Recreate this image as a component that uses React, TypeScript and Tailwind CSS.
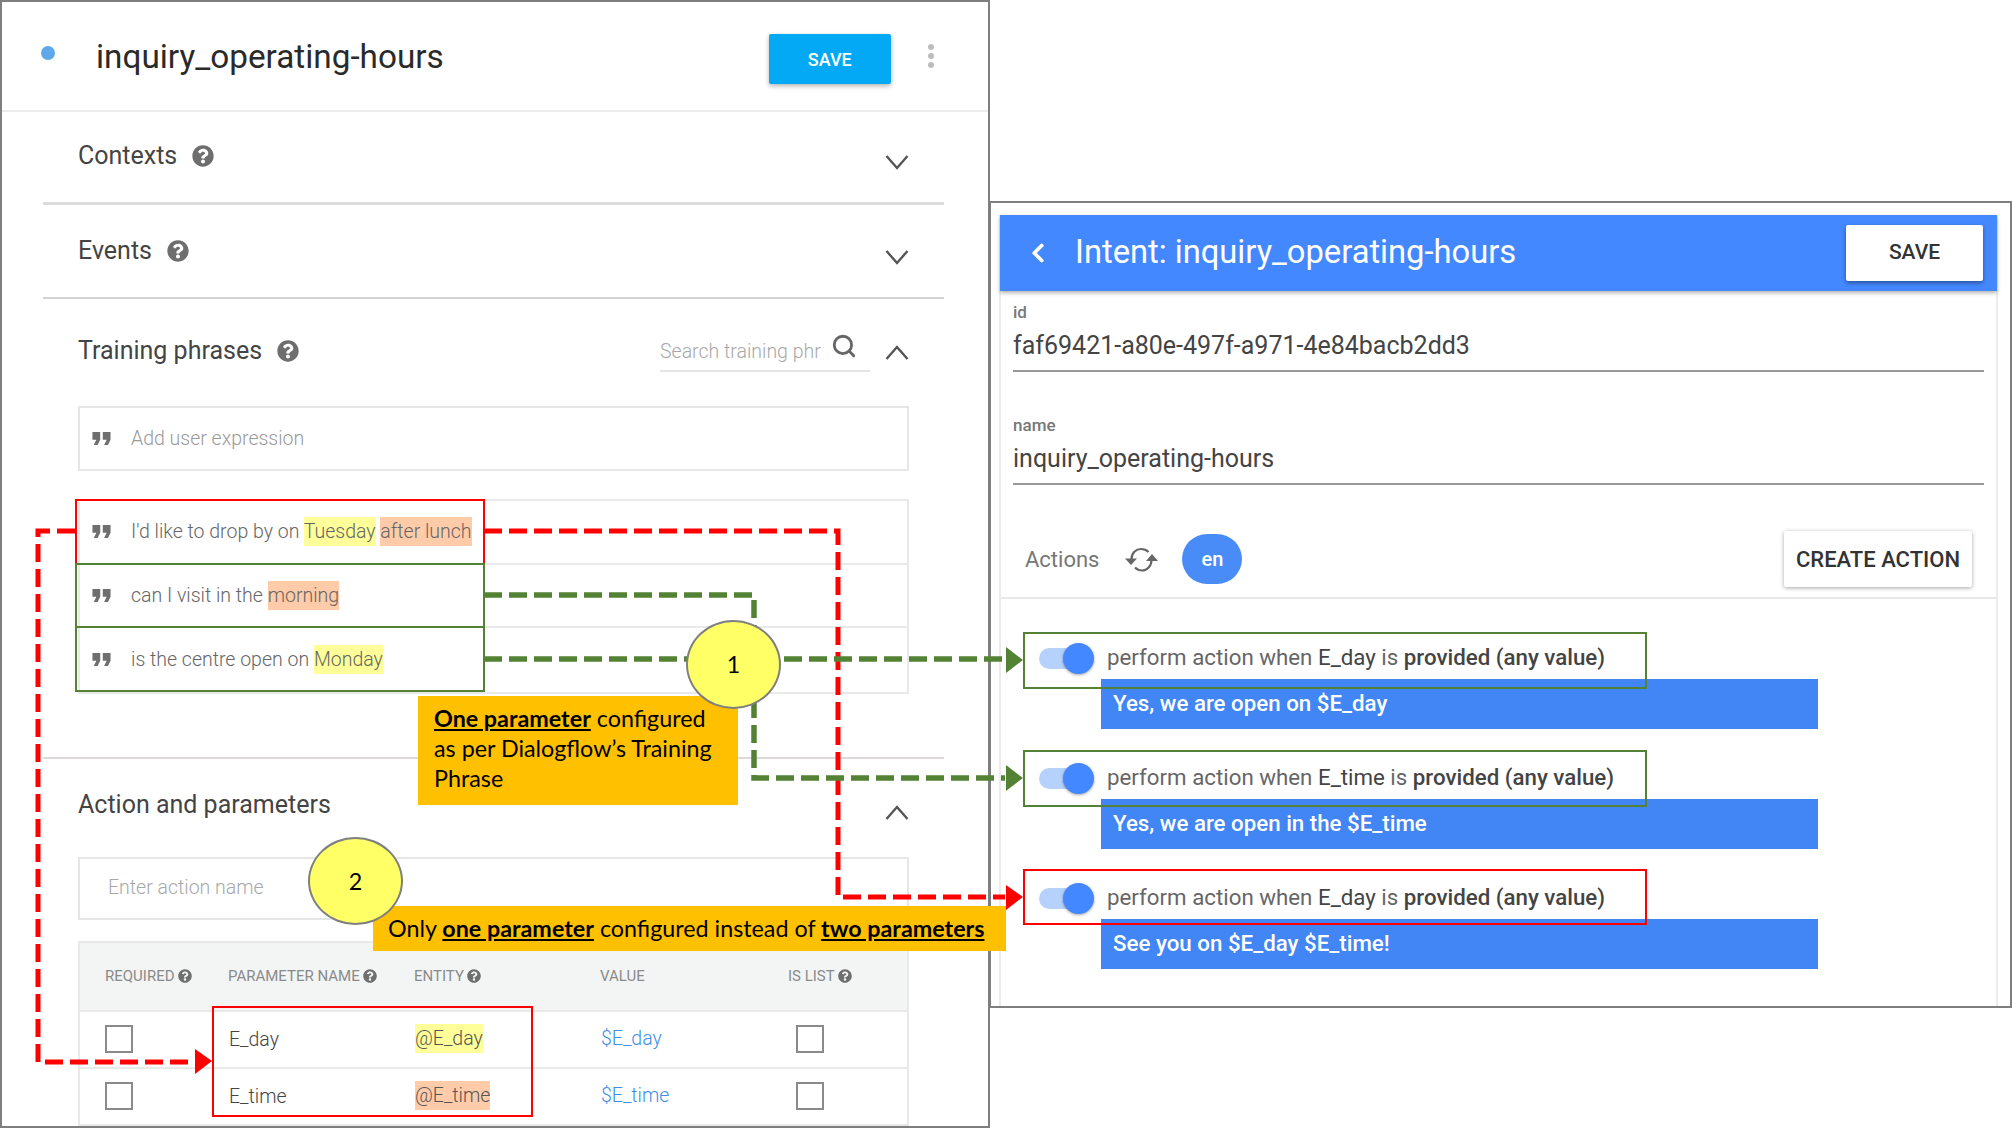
import { ChevronLeft, Search } from "lucide-react";
import { FaQuestionCircle } from "react-icons/fa";
import { MdFormatQuote } from "react-icons/md";

const roboto = "font-['Roboto',sans-serif]";
const note = "font-['Lato',sans-serif] text-black text-[23.3px]";

function Help({ size = 22, className = "" }: { size?: number; className?: string }) {
  return <FaQuestionCircle size={size} className={`text-[#6e6e6e] ${className}`} />;
}

function Quote() {
  return <MdFormatQuote size={31} className="text-[#6f6f6f] shrink-0 -ml-[9px] mr-[14px]" />;
}

function Chevron({ up, className = "" }: { up?: boolean; className?: string }) {
  return (
    <svg width="24" height="15" viewBox="0 0 24 15" fill="none" className={`shrink-0 ${className}`}>
      <path d={up ? "M1.5 14L12 2L22.5 14" : "M1.5 1L12 13L22.5 1"} stroke="#555" strokeWidth="2.4" />
    </svg>
  );
}

function SyncIcon() {
  return (
    <svg width="33" height="25" viewBox="0 0 33 25" fill="none" className="ml-[26px] shrink-0">
      <path d="M6.5 12C6.5 6 11 2 16 2C19 2 21.5 3 23.5 5" stroke="#666" strokeWidth="2.2" />
      <path d="M0 11.5H12L6 18Z" fill="#666" />
      <path d="M26.5 13C26.5 19 22 23.5 17 23.5C14 23.5 12 22.5 10 20.5" stroke="#666" strokeWidth="2.2" />
      <path d="M21 14H33L27 7Z" fill="#666" />
    </svg>
  );
}

function SectionTitle({ title, help, open }: { title: string; help?: boolean; open?: boolean }) {
  return (
    <div className="flex items-start justify-between">
      <div className="flex items-center gap-[15px] text-[25px] text-[#444] leading-[30px]">
        {title}
        {help && <Help />}
      </div>
      {!open && <Chevron className="mt-[14px]" />}
    </div>
  );
}

function Phrase({ children }: { children: React.ReactNode }) {
  return (
    <div className="flex items-center h-[63.5px] pl-[15px] border-b-2 border-[#e9e9e9] text-[19.5px] font-light text-[#666] last:border-b-0">
      <Quote />
      <span>{children}</span>
    </div>
  );
}

const Yellow = ({ children }: { children: React.ReactNode }) => (
  <span className="bg-[#ffff99] py-[3px]">{children}</span>
);
const Peach = ({ children }: { children: React.ReactNode }) => (
  <span className="bg-[#ffcba8] py-[3px]">{children}</span>
);

function ParamRow({ name, entity, value }: { name: string; entity: React.ReactNode; value: string }) {
  return (
    <div className="grid grid-cols-[123px_186px_186px_188px_1fr] pl-[25px] h-[57px] items-center border-b-2 border-[#e9e9e9] text-[19.5px] font-light">
      <div className="w-[28px] h-[28px] border-2 border-[#8a8a8a]" />
      <div className="text-[#444] ml-[1px] mt-[2px]">{name}</div>
      <div className="text-[#555] ml-[1px]">{entity}</div>
      <div className="text-[#3f8fe8] ml-[1px]">{value}</div>
      <div className="w-[28px] h-[28px] border-2 border-[#8a8a8a] ml-[8px]" />
    </div>
  );
}

function HeadCell({ label, help = true }: { label: string; help?: boolean }) {
  return (
    <div className="flex items-center gap-[3px] text-[15px] text-[#8a8a8a] font-normal">
      {label}
      {help && <Help size={14} />}
    </div>
  );
}

function LeftPanel() {
  return (
    <div className={`w-[990px] h-[1128px] shrink-0 border-2 border-[#7f7f7f] bg-white overflow-hidden ${roboto}`}>
      <div className="flex items-center h-[110px] border-b-2 border-[#ececec]">
        <div className="w-[14px] h-[14px] rounded-full bg-[#5ea9ea] ml-[39px] -mt-[6px]" />
        <div className="ml-[41px] mt-[2px] text-[33.3px] text-[#2a2a2a]">inquiry_operating-hours</div>
        <button className="ml-[325px] mt-[6px] w-[122px] h-[50px] rounded-[2px] bg-[#03a9f4] text-white text-[18px] font-medium shadow-[0_2px_5px_rgba(0,0,0,0.3)]">
          SAVE
        </button>
        <div className="ml-[37px] flex flex-col gap-[3px]">
          <i className="block w-[6px] h-[6px] rounded-full bg-[#bdbdbd]" />
          <i className="block w-[6px] h-[6px] rounded-full bg-[#bdbdbd]" />
          <i className="block w-[6px] h-[6px] rounded-full bg-[#bdbdbd]" />
        </div>
      </div>

      <div className="ml-[41px] mr-[44px] px-[35px]">
        <div className="h-[93px] pt-[29px] -mx-[35px] px-[35px] border-b-[3px] border-[#dcdcdc]">
          <SectionTitle title="Contexts" help />
        </div>
        <div className="h-[94px] pt-[31px] -mx-[35px] px-[35px] border-b-2 border-[#d6d2d2]">
          <SectionTitle title="Events" help />
        </div>

        <div className="pt-[37px] flex items-start justify-between h-[107px]">
          <SectionTitle title="Training phrases" help open />
          <div className="flex items-start">
            <div className="flex items-start w-[210px] h-[36px] border-b-2 border-[#e4e4e4] text-[19.5px] font-light text-[#a8a8a8]">
              <span className="mt-[1px] whitespace-nowrap">Search training phr</span>
              <Search size={26} strokeWidth={2.6} className="text-[#666] ml-[10px] -mt-[3px]" />
            </div>
            <Chevron up className="ml-[15px] mt-[9px]" />
          </div>
        </div>

        <div className="flex items-center h-[65px] pl-[15px] border-2 border-[#e6e6e6] text-[19.5px] font-light text-[#9a9a9a]">
          <Quote />
          Add user expression
        </div>

        <div className="mt-[28px] border-2 border-[#e9e9e9]">
          <Phrase>
            I'd like to drop by on <Yellow>Tuesday</Yellow> <Peach>after lunch</Peach>
          </Phrase>
          <Phrase>
            can I visit in the <Peach>morning</Peach>
          </Phrase>
          <Phrase>
            is the centre open on <Yellow>Monday</Yellow>
          </Phrase>
        </div>

        <div className="-mx-[35px] mt-[63px] border-t-2 border-[#ddd9d9]" />

        <div className="flex items-start justify-between h-[98px]">
          <div className="text-[25px] leading-[30px] text-[#444] mt-[31px]">Action and parameters</div>
          <Chevron up className="mt-[46px]" />
        </div>

        <div className="flex items-center h-[63px] pl-[28px] border-2 border-[#e6e6e6] text-[19.5px] font-light text-[#a8a8a8]">
          Enter action name
        </div>

        <div className="mt-[21px] border-x-2 border-[#e9e9e9]">
          <div className="grid grid-cols-[123px_186px_186px_188px_1fr] pl-[25px] h-[71px] items-center bg-[#f3f5f5] border-y-2 border-[#e9e9e9]">
            <HeadCell label="REQUIRED" />
            <HeadCell label="PARAMETER NAME" />
            <HeadCell label="ENTITY" />
            <HeadCell label="VALUE" help={false} />
            <HeadCell label="IS LIST" />
          </div>
          <ParamRow name="E_day" entity={<Yellow>@E_day</Yellow>} value="$E_day" />
          <ParamRow name="E_time" entity={<Peach>@E_time</Peach>} value="$E_time" />
        </div>
      </div>
    </div>
  );
}

function ActionRow({ param, reply }: { param: string; reply: string }) {
  return (
    <div className="pl-[38px] h-[120px]">
      <div className="flex items-center h-[45px] pt-[3px]">
        <div className="relative w-[55px] h-[31px] shrink-0">
          <div className="absolute left-0 top-[5px] w-[42px] h-[21px] rounded-full bg-[#b6d1fb]" />
          <div className="absolute right-0 top-0 w-[31px] h-[31px] rounded-full bg-[#4488ff] shadow-[0_1px_3px_rgba(0,0,0,0.35)]" />
        </div>
        <div className="ml-[13px] text-[22.3px] text-[#666] whitespace-nowrap">
          perform action when <span className="text-[#444]">{param}</span> is{" "}
          <span className="font-medium text-[#444]">provided (any value)</span>
        </div>
      </div>
      <div className="ml-[62px] w-[717px] h-[50px] bg-[#4285f4] pl-[12px] pt-[8px] text-[22.3px] font-medium text-white">
        {reply}
      </div>
    </div>
  );
}

function RightPanel() {
  return (
    <div className={`-ml-[1px] mt-[201px] w-[1023px] h-[807px] shrink-0 border-2 border-[#7f7f7f] bg-white pl-[9px] pr-[13px] pt-[12px] ${roboto}`}>
      <div className="h-full border-x-2 border-[#ececec] -mx-[1px]">
        <div className="flex items-center h-[76px] -mx-[1px] bg-[#4488ff] shadow-[0_2px_4px_rgba(0,0,0,0.3)]">
          <ChevronLeft size={30} strokeWidth={3} className="text-white ml-[23px]" />
          <div className="ml-[22px] text-[32.7px] text-white">Intent: inquiry_operating-hours</div>
          <button className="ml-auto mr-[14px] w-[137px] h-[56px] rounded-[2px] bg-white text-[21px] font-medium text-[#333] shadow-[0_2px_4px_rgba(0,0,0,0.4)]">
            SAVE
          </button>
        </div>

        <div className="px-[12px] pt-[10px]">
          <div className="text-[17px] leading-[22px] font-medium text-[#777]">id</div>
          <div className="h-[49px] border-b-2 border-[#999] pt-[6px] text-[25px] leading-[34px] text-[#444]">
            faf69421-a80e-497f-a971-4e84bacb2dd3
          </div>
          <div className="mt-[42px] text-[17px] leading-[22px] font-medium text-[#777]">name</div>
          <div className="h-[49px] border-b-2 border-[#999] pt-[6px] text-[25px] leading-[34px] text-[#444]">
            inquiry_operating-hours
          </div>
        </div>

        <div className="flex items-center h-[114px] pt-[36px] px-[24px] border-b-2 border-[#e8e8e8]">
          <div className="text-[22px] text-[#777]">Actions</div>
          <SyncIcon />
          <div className="ml-[24px] flex items-center justify-center w-[60px] h-[50px] rounded-full bg-[#4a8cf7] text-[20px] font-medium text-white">
            en
          </div>
          <button className="ml-auto w-[188px] h-[56px] rounded-[2px] bg-white text-[22px] font-medium text-[#333] shadow-[0_1px_4px_rgba(0,0,0,0.35)]">
            CREATE ACTION
          </button>
        </div>

        <div className="pt-[35px]">
          <ActionRow param="E_day" reply="Yes, we are open on $E_day" />
          <ActionRow param="E_time" reply="Yes, we are open in the $E_time" />
          <ActionRow param="E_day" reply="See you on $E_day $E_time!" />
        </div>
      </div>
    </div>
  );
}

function Annotations() {
  return (
    <>
      <svg className="absolute left-0 top-0 w-[2012px] h-[1129px] pointer-events-none" viewBox="0 0 2012 1129" fill="none">
        <g stroke="#ff0000" strokeWidth="5" strokeDasharray="18 7">
          <path d="M75 531H38V1062H195" />
          <path d="M484 531H838V897H1005" />
        </g>
        <polygon points="195,1049 212,1061 195,1074" fill="#ff0000" />
        <polygon points="1006,885 1023,897 1006,910" fill="#ff0000" />
        <g stroke="#548235" strokeWidth="5.5" strokeDasharray="18 7">
          <path d="M484 595H754V778H1005" />
          <path d="M484 659H1005" />
        </g>
        <polygon points="1006,647 1023,660 1006,673" fill="#548235" />
        <polygon points="1006,765 1023,778 1006,791" fill="#548235" />
      </svg>

      {/* boxes round the matched rows */}
      <div className="absolute left-[75px] top-[499px] w-[410px] h-[66px] border-2 border-[#ff0000]" />
      <div className="absolute left-[75px] top-[563px] w-[410px] h-[129px] border-2 border-[#548235]" />
      <div className="absolute left-[75px] top-[626px] w-[410px] h-[2px] bg-[#548235]" />
      <div className="absolute left-[212px] top-[1006px] w-[321px] h-[111px] border-2 border-[#ff0000]" />
      <div className="absolute left-[1023px] top-[632px] w-[624px] h-[57px] border-2 border-[#548235]" />
      <div className="absolute left-[1023px] top-[750px] w-[624px] h-[57px] border-2 border-[#548235]" />
      <div className="absolute left-[1023px] top-[869px] w-[624px] h-[56px] border-2 border-[#ff0000]" />

      <div className={`absolute left-[418px] top-[696px] w-[320px] h-[109px] bg-[#ffc000] pl-[16px] pt-[7px] leading-[30px] ${note}`}>
        <b className="underline">One parameter</b> configured
        <br />
        as per Dialogflow’s Training
        <br />
        Phrase
      </div>
      <div className={`absolute left-[373px] top-[906px] w-[633px] h-[45px] bg-[#ffc000] pl-[15px] flex items-center whitespace-pre ${note}`}>
        Only <b className="underline">one parameter</b> configured instead of <b className="underline">two parameters</b>
      </div>

      <div className={`absolute left-[686px] top-[620px] w-[95px] h-[89px] rounded-[50%] bg-[#ffff66] border-2 border-[#7f7f7f] flex items-center justify-center ${note}`}>
        1
      </div>
      <div className={`absolute left-[308px] top-[837px] w-[95px] h-[88px] rounded-[50%] bg-[#ffff66] border-2 border-[#7f7f7f] flex items-center justify-center ${note}`}>
        2
      </div>
    </>
  );
}

export default function App() {
  return (
    <div className="relative flex items-start w-[2012px] h-[1129px] overflow-hidden bg-white">
      <LeftPanel />
      <RightPanel />
      <Annotations />
    </div>
  );
}
